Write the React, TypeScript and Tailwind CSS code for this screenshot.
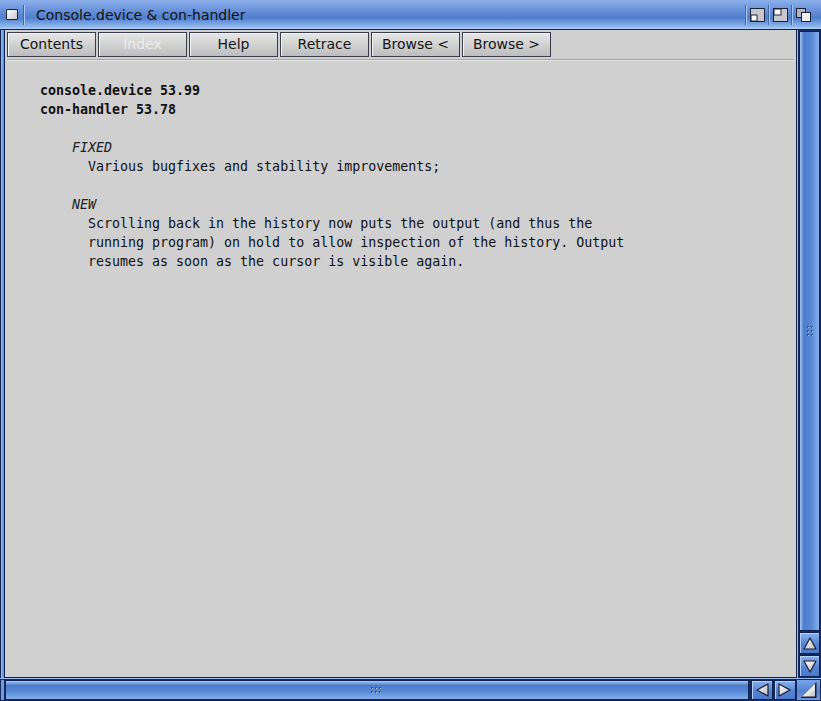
import React from 'react';

const sans = { fontFamily: '"DejaVu Sans", "Liberation Sans", sans-serif' };
const mono = { fontFamily: '"DejaVu Sans Mono", "Liberation Mono", monospace' };

function Sep() {
  return <div className="w-[2px] h-[20px] border-l border-[#3e66a8] bg-[#a8c6f2] mx-[3px]" />;
}

function Grip({ vertical }: { vertical: boolean }) {
  const dots = [];
  for (let r = 0; r < 3; r++) {
    for (let c = 0; c < 2; c++) {
      const x = vertical ? c * 4 : r * 4;
      const y = vertical ? r * 4 : c * 4;
      dots.push(<rect key={`${r}-${c}`} x={x} y={y} width="2" height="2" fill="#2c4f96" />);
      dots.push(<rect key={`h${r}-${c}`} x={x + 1} y={y + 1} width="1" height="1" fill="#b8d2f8" />);
    }
  }
  return (
    <svg width={vertical ? 6 : 10} height={vertical ? 10 : 6} className="block">
      {dots}
    </svg>
  );
}

function Arrow({ dir }: { dir: 'up' | 'down' | 'left' | 'right' }) {
  const pts = {
    up: '7,2 13,13 1,13',
    down: '1,2 13,2 7,13',
    left: '2,7 13,1 13,13',
    right: '1,1 12,7 1,13',
  }[dir];
  return (
    <svg width="14" height="15" viewBox="0 0 14 15" className="block">
      <defs>
        <linearGradient id={`ag-${dir}`} x1="0" y1="0" x2="1" y2="1">
          <stop offset="0" stopColor="#ffffff" />
          <stop offset="1" stopColor="#b8b8c0" />
        </linearGradient>
      </defs>
      <polygon points={pts} fill={`url(#ag-${dir})`} stroke="#1a1f30" strokeWidth="1.2" strokeLinejoin="round" />
    </svg>
  );
}

function BlueButton({ children, className = '' }: { children?: React.ReactNode; className?: string }) {
  return (
    <div
      className={`flex items-center justify-center border border-[#0f2250] bg-[linear-gradient(to_bottom,#8ab2ee,#5584d2_55%,#4a7acb)] shadow-[inset_1px_1px_0_#b4d0f8] ${className}`}
    >
      {children}
    </div>
  );
}

function TitleBar() {
  return (
    <div className="h-[30px] shrink-0 border-b border-[#0f2250] bg-[linear-gradient(to_bottom,#8cb0ea_0%,#6892da_35%,#4f7fcc_62%,#8fb6ee_92%,#b4d2fa_100%)] flex items-center pl-[6px] pr-[10px]">
      <div className="w-[12px] h-[11px] border border-[#1c2238] bg-[linear-gradient(135deg,#ffffff,#c8c8d0)] rounded-[1px]" />
      <div className="ml-[2px] mr-[8px]">
        <Sep />
      </div>
      <span className="text-[14px] text-[#111] leading-none" style={sans}>
        Console.device &amp; con-handler
      </span>
      <div className="flex-1" />
      <Sep />
      <svg width="15" height="14" className="block">
        <rect x="0.5" y="0.5" width="14" height="13" fill="#c8c8cc" stroke="#1c2238" />
        <rect x="1" y="7" width="6" height="6" fill="#ffffff" stroke="#1c2238" />
      </svg>
      <Sep />
      <svg width="15" height="14" className="block">
        <rect x="0.5" y="0.5" width="14" height="13" fill="#c8c8cc" stroke="#1c2238" />
        <rect x="1" y="1" width="7" height="6" fill="#ffffff" stroke="#1c2238" />
      </svg>
      <Sep />
      <svg width="15" height="14" className="block">
        <rect x="0.5" y="0.5" width="9" height="9" fill="#b4b4bc" stroke="#1c2238" />
        <rect x="5.5" y="4.5" width="9" height="9" fill="#eeeeee" stroke="#1c2238" />
      </svg>
    </div>
  );
}

const buttons = [
  { label: 'Contents', disabled: false },
  { label: 'Index', disabled: true },
  { label: 'Help', disabled: false },
  { label: 'Retrace', disabled: false },
  { label: 'Browse <', disabled: false },
  { label: 'Browse >', disabled: false },
];

function Toolbar() {
  return (
    <div className="flex gap-[2px] pt-[2px] pl-[2px]">
      {buttons.map((b) => (
        <div
          key={b.label}
          className={`w-[89px] h-[25px] flex items-center justify-center border border-[#3a3c4c] bg-[linear-gradient(to_bottom,#e6e6e6,#d2d2d2_50%,#bdbdbd)] shadow-[inset_1px_1px_0_#f4f4f4] text-[14px] ${
            b.disabled ? 'text-[#ececec]' : 'text-[#151515]'
          }`}
          style={sans}
        >
          {b.label}
        </div>
      ))}
    </div>
  );
}

function Document() {
  return (
    <div className="pt-[20px] pl-[35px] text-[13.3px] leading-[19px] text-[#111]" style={mono}>
      <div className="font-bold">console.device 53.99</div>
      <div className="font-bold">con-handler 53.78</div>
      <div className="h-[19px]" />
      <div className="pl-[32px] italic font-light text-[#222]">FIXED</div>
      <div className="pl-[48px]">Various bugfixes and stability improvements;</div>
      <div className="h-[19px]" />
      <div className="pl-[32px] italic font-light text-[#222]">NEW</div>
      <div className="pl-[48px]">Scrolling back in the history now puts the output (and thus the</div>
      <div className="pl-[48px]">running program) on hold to allow inspection of the history. Output</div>
      <div className="pl-[48px]">resumes as soon as the cursor is visible again.</div>
    </div>
  );
}

export default function App() {
  return (
    <div className="w-[821px] h-[701px] flex flex-col bg-[#16295a] overflow-hidden">
      <TitleBar />
      <div className="flex flex-1 min-h-0">
        <div className="w-[5px] border-l border-r border-[#0f2250] bg-[linear-gradient(to_right,#9cc0f4,#5a88d4)]" />
        <div className="flex-1 bg-[#d0d0d0] border-r border-b border-[#13254f]">
          <Toolbar />
          <div className="mx-[2px] mt-[2px] h-[2px] border-t border-[#a6a6a6] border-b border-b-[#e4e4e4]" />
          <Document />
        </div>
        <div className="w-[24px] flex flex-col gap-[1px] p-[1px] pb-[1px] bg-[#16295a] border-l border-[#9cbff2]">
          <div className="flex-1 flex items-center justify-center border border-[#0f2250] bg-[linear-gradient(to_right,#a6c6f6,#4c7ccb_20%,#5a8ad6_60%,#86aeee)]">
            <Grip vertical />
          </div>
          <BlueButton className="h-[22px]">
            <Arrow dir="up" />
          </BlueButton>
          <BlueButton className="h-[22px]">
            <Arrow dir="down" />
          </BlueButton>
        </div>
      </div>
      <div className="h-[23px] shrink-0 flex gap-[1px] p-[1px] bg-[#16295a] border-t border-[#9cbff2]">
        <div className="w-[3px] bg-[#6f9ae0]" />
        <div className="flex-1 flex items-center justify-center border border-[#0f2250] bg-[linear-gradient(to_bottom,#a6c6f6,#4c7ccb_25%,#5a8ad6_60%,#86aeee)]">
          <div className="ml-[-3px]">
            <Grip vertical={false} />
          </div>
        </div>
        <BlueButton className="w-[22px] ml-[1px]">
          <Arrow dir="left" />
        </BlueButton>
        <BlueButton className="w-[22px]">
          <Arrow dir="right" />
        </BlueButton>
        <div className="w-[23px] flex items-center justify-center bg-[linear-gradient(to_bottom,#7aa4e8,#5584d2_55%,#6f9ae0)]">
          <div className="w-[16px] h-[16px] p-[1.5px] bg-[#1a1f30] [clip-path:polygon(100%_0,100%_100%,0_100%)]">
            <div className="w-full h-full bg-[linear-gradient(135deg,#ffffff_40%,#b8b8c0)] [clip-path:polygon(100%_0,100%_100%,0_100%)]" />
          </div>
        </div>
      </div>
    </div>
  );
}
